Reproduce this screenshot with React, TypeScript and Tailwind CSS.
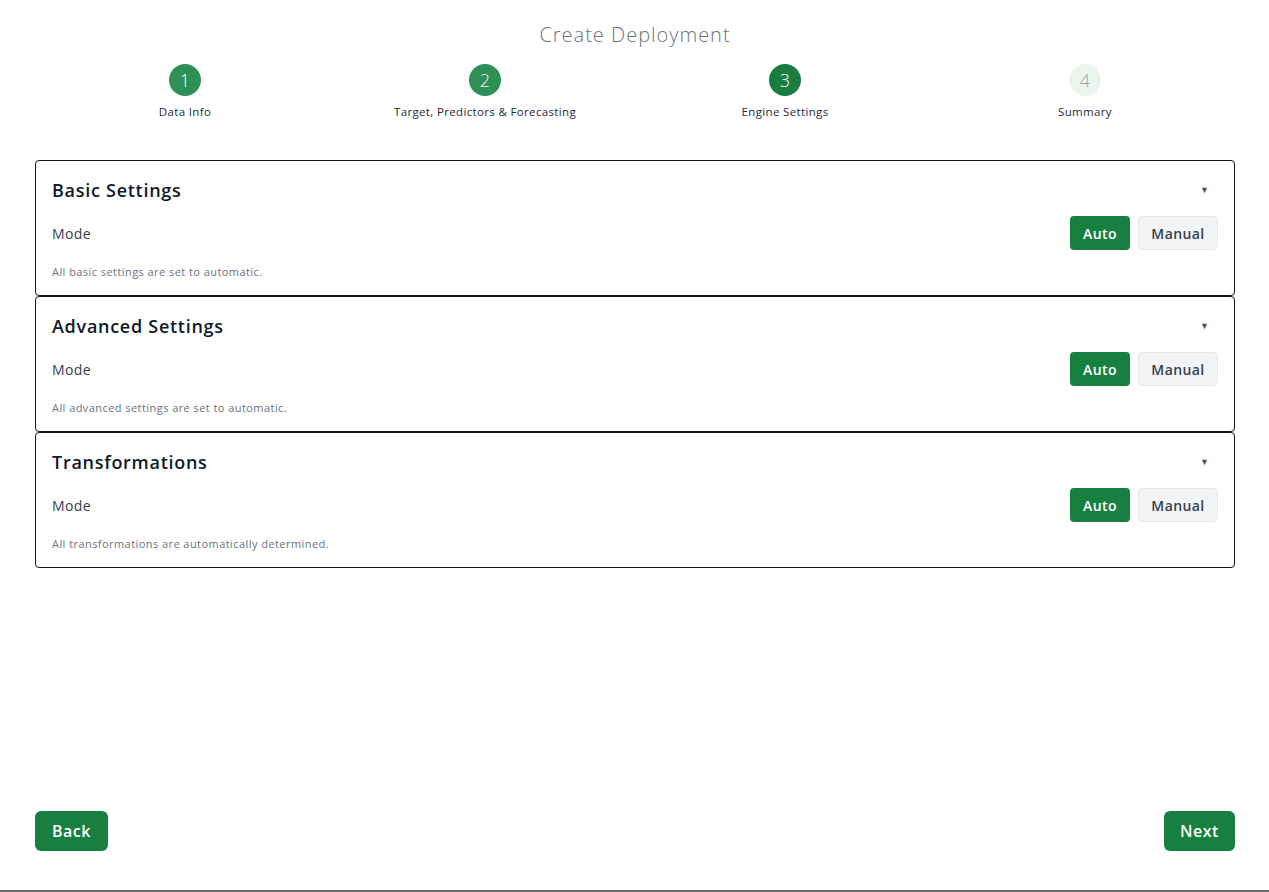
import { useState } from 'react'

const steps = [
  { n: 1, label: 'Data Info', state: 'done' },
  { n: 2, label: 'Target, Predictors & Forecasting', state: 'done' },
  { n: 3, label: 'Engine Settings', state: 'active' },
  { n: 4, label: 'Summary', state: 'todo' },
]

const sections = [
  { title: 'Basic Settings', note: 'All basic settings are set to automatic.' },
  { title: 'Advanced Settings', note: 'All advanced settings are set to automatic.' },
  { title: 'Transformations', note: 'All transformations are automatically determined.' },
]

function Stepper() {
  return (
    <div className="grid grid-cols-4 mt-[17px]">
      {steps.map((s) => (
        <div key={s.n} className="flex flex-col items-center">
          <div
            className={
              s.state === 'done'
                ? 'w-8 h-8 rounded-full flex items-center justify-center text-[18px] font-light text-white bg-[#2e9056]'
                : s.state === 'active'
                ? 'w-8 h-8 rounded-full flex items-center justify-center text-[18px] font-light text-white bg-[#177d40]'
                : 'w-8 h-8 rounded-full flex items-center justify-center text-[18px] font-light text-[#9aa3b5] bg-[#eaf5ee]'
            }
          >
            {s.n}
          </div>
          <div className="mt-2 text-[11.5px] leading-4 tracking-[0.03em] text-[#1f2937]">{s.label}</div>
        </div>
      ))}
    </div>
  )
}

function Section({ title, note }: { title: string; note: string }) {
  const [mode, setMode] = useState<'auto' | 'manual'>('auto')
  return (
    <div className="border border-[#111] rounded-[4px] h-[136px] px-4 pt-[17px]">
      <div className="flex items-center justify-between">
        <h2 className="text-[18px] leading-6 font-semibold tracking-[0.04em] text-[#111827]">{title}</h2>
        <span className="text-[9px] text-[#4b5563] mr-[9px]">▼</span>
      </div>
      <div className="flex items-center justify-between mt-[14px]">
        <span className="text-[14px] tracking-[0.03em] text-[#374151]">Mode</span>
        <div className="flex gap-2">
          <button
            onClick={() => setMode('auto')}
            className={
              mode === 'auto'
                ? 'h-[34px] w-[60px] rounded-[4px] text-[14px] font-semibold tracking-[0.03em] text-white bg-[#178040]'
                : 'h-[34px] w-[60px] rounded-[4px] text-[14px] font-semibold tracking-[0.03em] text-[#374151] bg-[#f3f4f6] border border-[#e5e7eb]'
            }
          >
            Auto
          </button>
          <button
            onClick={() => setMode('manual')}
            className={
              mode === 'manual'
                ? 'h-[34px] w-[80px] rounded-[4px] text-[14px] font-semibold tracking-[0.03em] text-white bg-[#178040]'
                : 'h-[34px] w-[80px] rounded-[4px] text-[14px] font-semibold tracking-[0.03em] text-[#374151] bg-[#f3f4f6] border border-[#e5e7eb]'
            }
          >
            Manual
          </button>
        </div>
      </div>
      <p className="mt-[14px] text-[11px] tracking-[0.04em] text-[#6b7280]">{note}</p>
    </div>
  )
}

export default function App() {
  return (
    <div
      className="h-[892px] bg-white flex flex-col pl-[35px] pr-[34px] border-b-2 border-[#6b6b6b]"
      style={{ fontFamily: '"Open Sans", sans-serif' }}
    >
      <h1 className="text-center text-[20px] font-light tracking-[0.05em] text-[#6b7280] mt-[23px] leading-6">Create Deployment</h1>
      <Stepper />

      <div className="mt-10 flex flex-col">
        {sections.map((s) => (
          <Section key={s.title} title={s.title} note={s.note} />
        ))}
      </div>

      <div className="mt-auto mb-[39px] flex justify-between">
        <button className="h-10 w-[73px] rounded-md bg-[#178040] text-white text-[16px] font-semibold tracking-[0.03em]">Back</button>
        <button className="h-10 w-[71px] rounded-md bg-[#178040] text-white text-[16px] font-semibold tracking-[0.03em]">Next</button>
      </div>
    </div>
  )
}
